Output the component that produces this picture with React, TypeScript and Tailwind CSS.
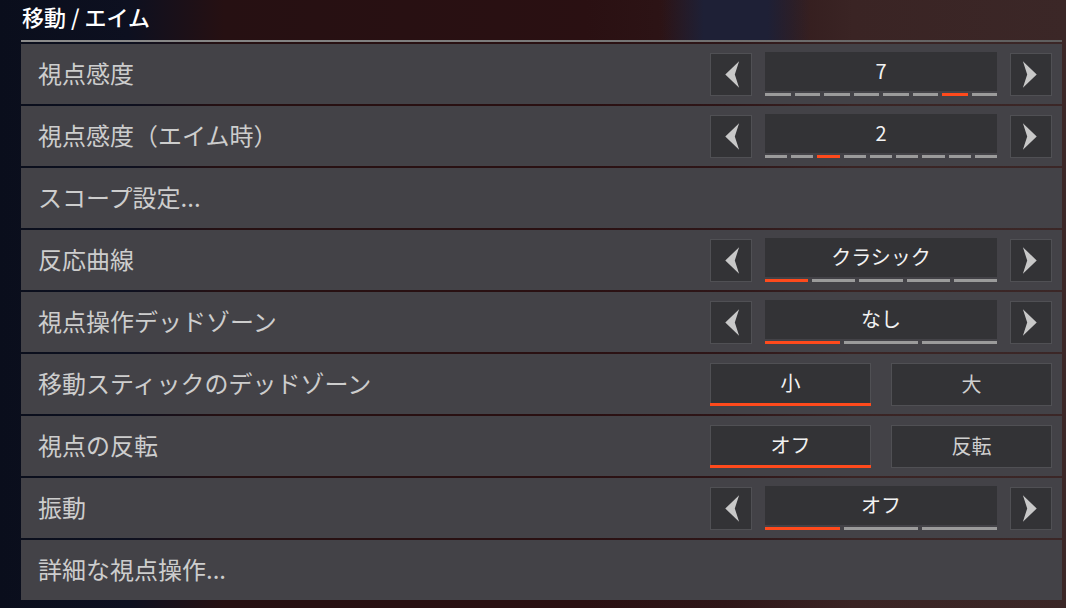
import React from "react";

function Arrow({ dir }: { dir: "l" | "r" }) {
  return (
    <div className="w-[42px] h-[43px] bg-[#333336] border border-[#505054] flex items-center justify-center shrink-0">
      <svg width="42" height="43" viewBox="0 0 42 43" className={dir === "r" ? "-scale-x-100" : ""}>
        <polygon points="29.5,7.5 15,21.5 29.5,35.5 25,21.5" fill="#c8c8c8" />
      </svg>
    </div>
  );
}

function Stepper({ value, count, active }: { value: string; count: number; active: number }) {
  return (
    <div className="flex items-center gap-[13px]">
      <Arrow dir="l" />
      <div className="w-[232px] h-[44px] flex flex-col">
        <div className="flex-1 bg-[#333336] flex items-center justify-center text-[20px] text-[#f2f2f2] leading-none pb-[1px]">
          {value}
        </div>
        <div className="mt-[2px] h-[3px] flex gap-[4px]">
          {Array.from({ length: count }).map((_, i) => (
            <div key={i} className={i === active ? "flex-1 bg-[#ff4a1c]" : "flex-1 bg-[#9b9b9b]"} />
          ))}
        </div>
      </div>
      <Arrow dir="r" />
    </div>
  );
}

function Toggle({ options, active }: { options: string[]; active: number }) {
  return (
    <div className="flex gap-[20px]">
      {options.map((o, i) => (
        <div
          key={o}
          className={
            i === active
              ? "w-[161px] h-[43px] bg-[#333336] border border-[#505054] border-b-0 flex flex-col text-[#f2f2f2]"
              : "w-[161px] h-[43px] bg-[#333336] border border-[#505054] flex flex-col text-[#cfcfcf]"
          }
        >
          <div className="flex-1 flex items-center justify-center text-[20px] leading-none">{o}</div>
          {i === active && <div className="h-[3px] bg-[#ff4a1c] -mx-px" />}
        </div>
      ))}
    </div>
  );
}

type Row = { label: string; control?: React.ReactNode };

export default function App() {
  const rows: Row[] = [
    { label: "視点感度", control: <Stepper value="7" count={8} active={6} /> },
    { label: "視点感度（エイム時）", control: <Stepper value="2" count={9} active={2} /> },
    { label: "スコープ設定..." },
    { label: "反応曲線", control: <Stepper value="クラシック" count={5} active={0} /> },
    { label: "視点操作デッドゾーン", control: <Stepper value="なし" count={3} active={0} /> },
    { label: "移動スティックのデッドゾーン", control: <Toggle options={["小", "大"]} active={0} /> },
    { label: "視点の反転", control: <Toggle options={["オフ", "反転"]} active={0} /> },
    { label: "振動", control: <Stepper value="オフ" count={3} active={0} /> },
    { label: "詳細な視点操作..." },
  ];
  return (
    <div className="w-[1066px] h-[608px] overflow-hidden font-['Noto_Sans_CJK_JP','Noto_Sans',sans-serif] bg-[linear-gradient(90deg,#0a0e1c_0%,#0d1020_12%,#261012_21%,#2a1012_55%,#2e1618_68%,#3a2424_80%,#3b2727_100%)]">
      <div className="h-[40px] bg-[linear-gradient(90deg,transparent_0%,transparent_62%,#1e2036_66%,#1e2036_72%,transparent_76%,transparent_100%)]">
        <div className="pl-[22px] pt-[1px] text-[22px] leading-[30px] font-medium text-white">移動 / エイム</div>
      </div>
      <div className="ml-[21px] w-[1041px] h-[2px] bg-[linear-gradient(90deg,#8c8c8c_0%,#7a7a7a_50%,#5e5e5e_100%)]" />
      <div className="ml-[21px] w-[1041px] mt-[2px] flex flex-col gap-[2px]">
        {rows.map((r) => (
          <div key={r.label} className="h-[60px] bg-[#434247] flex items-center justify-between pl-[17px] pr-[10px]">
            <div className="text-[24px] leading-none text-[#cdcdcd] pb-[3px]">{r.label}</div>
            {r.control}
          </div>
        ))}
      </div>
    </div>
  );
}
